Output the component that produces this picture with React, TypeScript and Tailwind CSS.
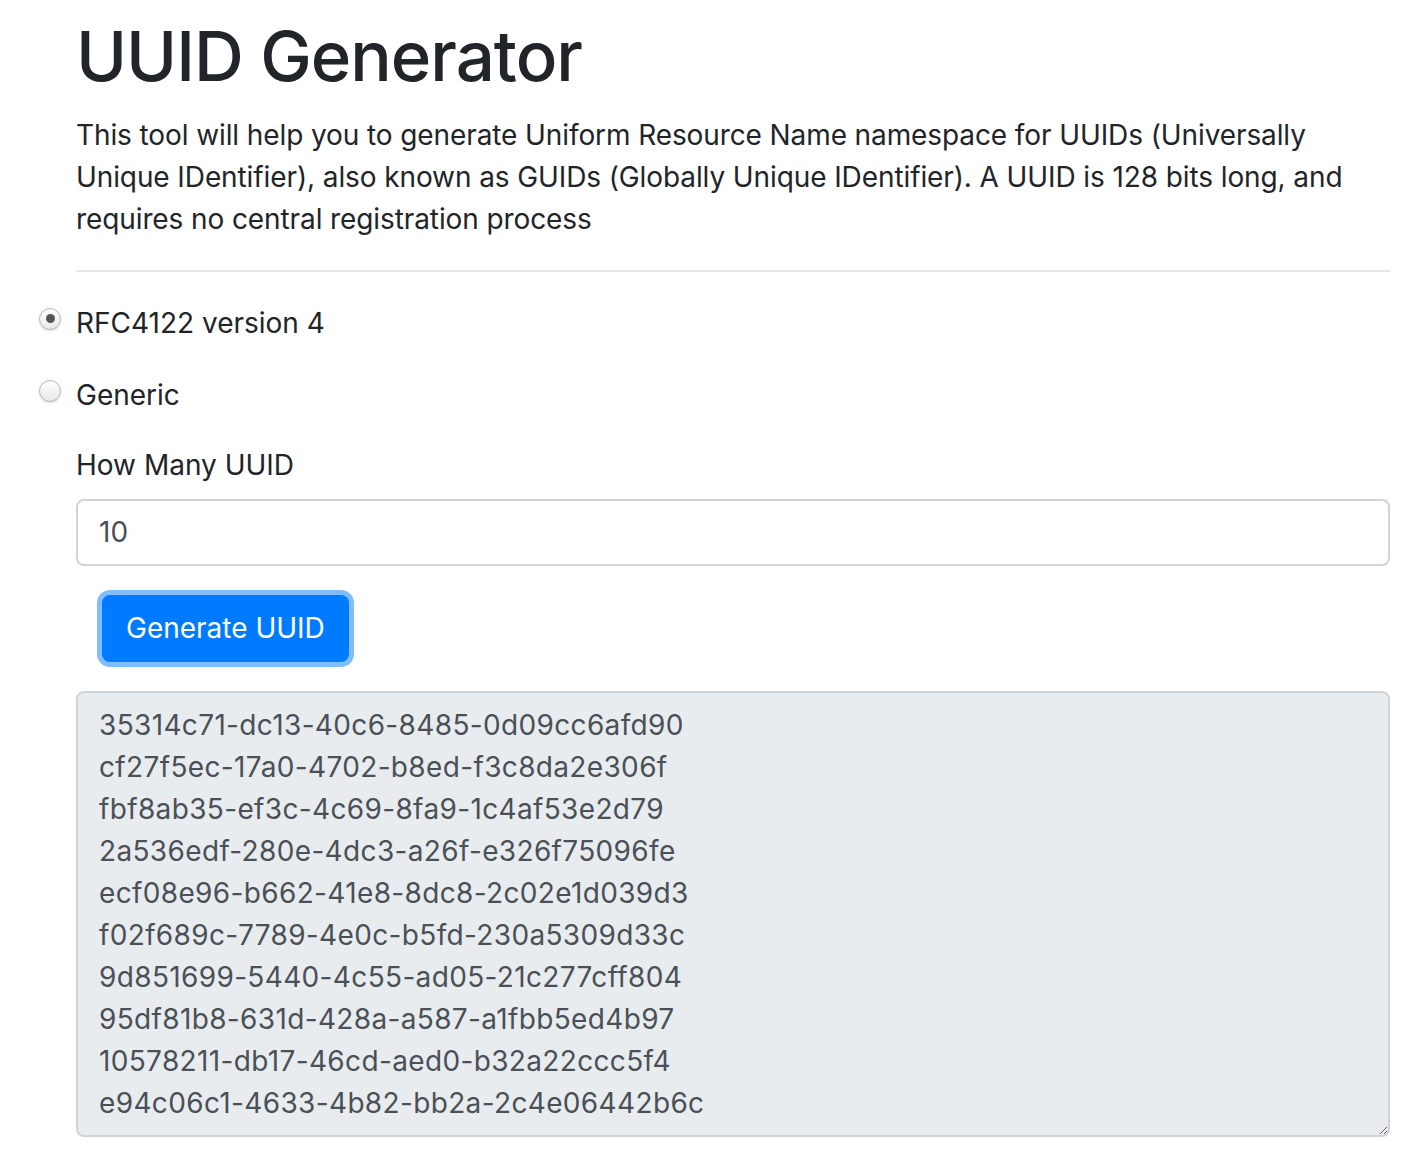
import React, { useState } from "react";

const UUIDS = [
  "35314c71-dc13-40c6-8485-0d09cc6afd90",
  "cf27f5ec-17a0-4702-b8ed-f3c8da2e306f",
  "fbf8ab35-ef3c-4c69-8fa9-1c4af53e2d79",
  "2a536edf-280e-4dc3-a26f-e326f75096fe",
  "ecf08e96-b662-41e8-8dc8-2c02e1d039d3",
  "f02f689c-7789-4e0c-b5fd-230a5309d33c",
  "9d851699-5440-4c55-ad05-21c277cff804",
  "95df81b8-631d-428a-a587-a1fbb5ed4b97",
  "10578211-db17-46cd-aed0-b32a22ccc5f4",
  "e94c06c1-4633-4b82-bb2a-2c4e06442b6c",
];

export default function App() {
  const [mode, setMode] = useState("v4");
  const [count, setCount] = useState("10");

  return (
    <div className="min-h-screen bg-white font-['Inter',sans-serif] text-[#212529]">
      <div className="pl-[76px] pr-4 w-[1406px]">
        {/* Title */}
        <h1 className="text-[69px] font-medium leading-[1.2] tracking-[-1px] pt-[15px]">UUID Generator</h1>

        <p className="text-[28px] leading-[42px] tracking-[-0.1px] mt-[16px] whitespace-nowrap">
          This tool will help you to generate Uniform Resource Name namespace for UUIDs (Universally
          <br />
          Unique IDentifier), also known as GUIDs (Globally Unique IDentifier). A UUID is 128 bits long, and
          <br />
          requires no central registration process
        </p>

        <hr className="border-t-2 border-[#e6e6e6] mt-[30px] w-[1314px]" />

        {/* Radios */}
        <div className="mt-[30px] flex flex-col gap-[30px]">
          {[
            { key: "v4", label: "RFC4122 version 4" },
            { key: "generic", label: "Generic" },
          ].map((r) => (
            <label key={r.key} className="relative flex items-center h-[42px] text-[28px] cursor-pointer">
              <span className="absolute -left-[37px] top-[6px] w-[22px] h-[22px] rounded-full border border-[#b5b5b5] bg-gradient-to-b from-white to-[#e8e8e8] shadow-[0_1px_2px_rgba(0,0,0,0.15)] flex items-center justify-center">
                {mode === r.key && <span className="w-[9px] h-[9px] rounded-full bg-[#555]" />}
              </span>
              <input
                type="radio"
                className="hidden"
                checked={mode === r.key}
                onChange={() => setMode(r.key)}
              />
              {r.label}
            </label>
          ))}
        </div>

        {/* Count */}
        <div className="mt-[28px] w-[1314px]">
          <label className="block text-[28px] leading-[42px]">How Many UUID</label>
          <input
            value={count}
            onChange={(e) => setCount(e.target.value)}
            className="mt-[13px] w-full h-[67px] px-[21px] text-[28px] text-[#495057] border-2 border-[#ced4da] rounded-[8px] outline-none"
          />
        </div>

        <div className="pl-[26px] mt-[29px]">
          <button className="h-[67px] px-[24px] bg-[#007bff] text-white text-[28px] rounded-[8px] ring-[5px] ring-[#80bdff]">
            Generate UUID
          </button>
        </div>

        {/* Output */}
        <textarea
          readOnly
          value={UUIDS.join("\n")}
          className="mt-[29px] block w-[1314px] h-[446px] bg-[#e9ecef] border-2 border-[#ced4da] rounded-[8px] px-[21px] py-[11px] text-[28px] leading-[42px] tracking-[0.35px] text-[#495057] outline-none resize-y"
        />
      </div>
    </div>
  );
}
